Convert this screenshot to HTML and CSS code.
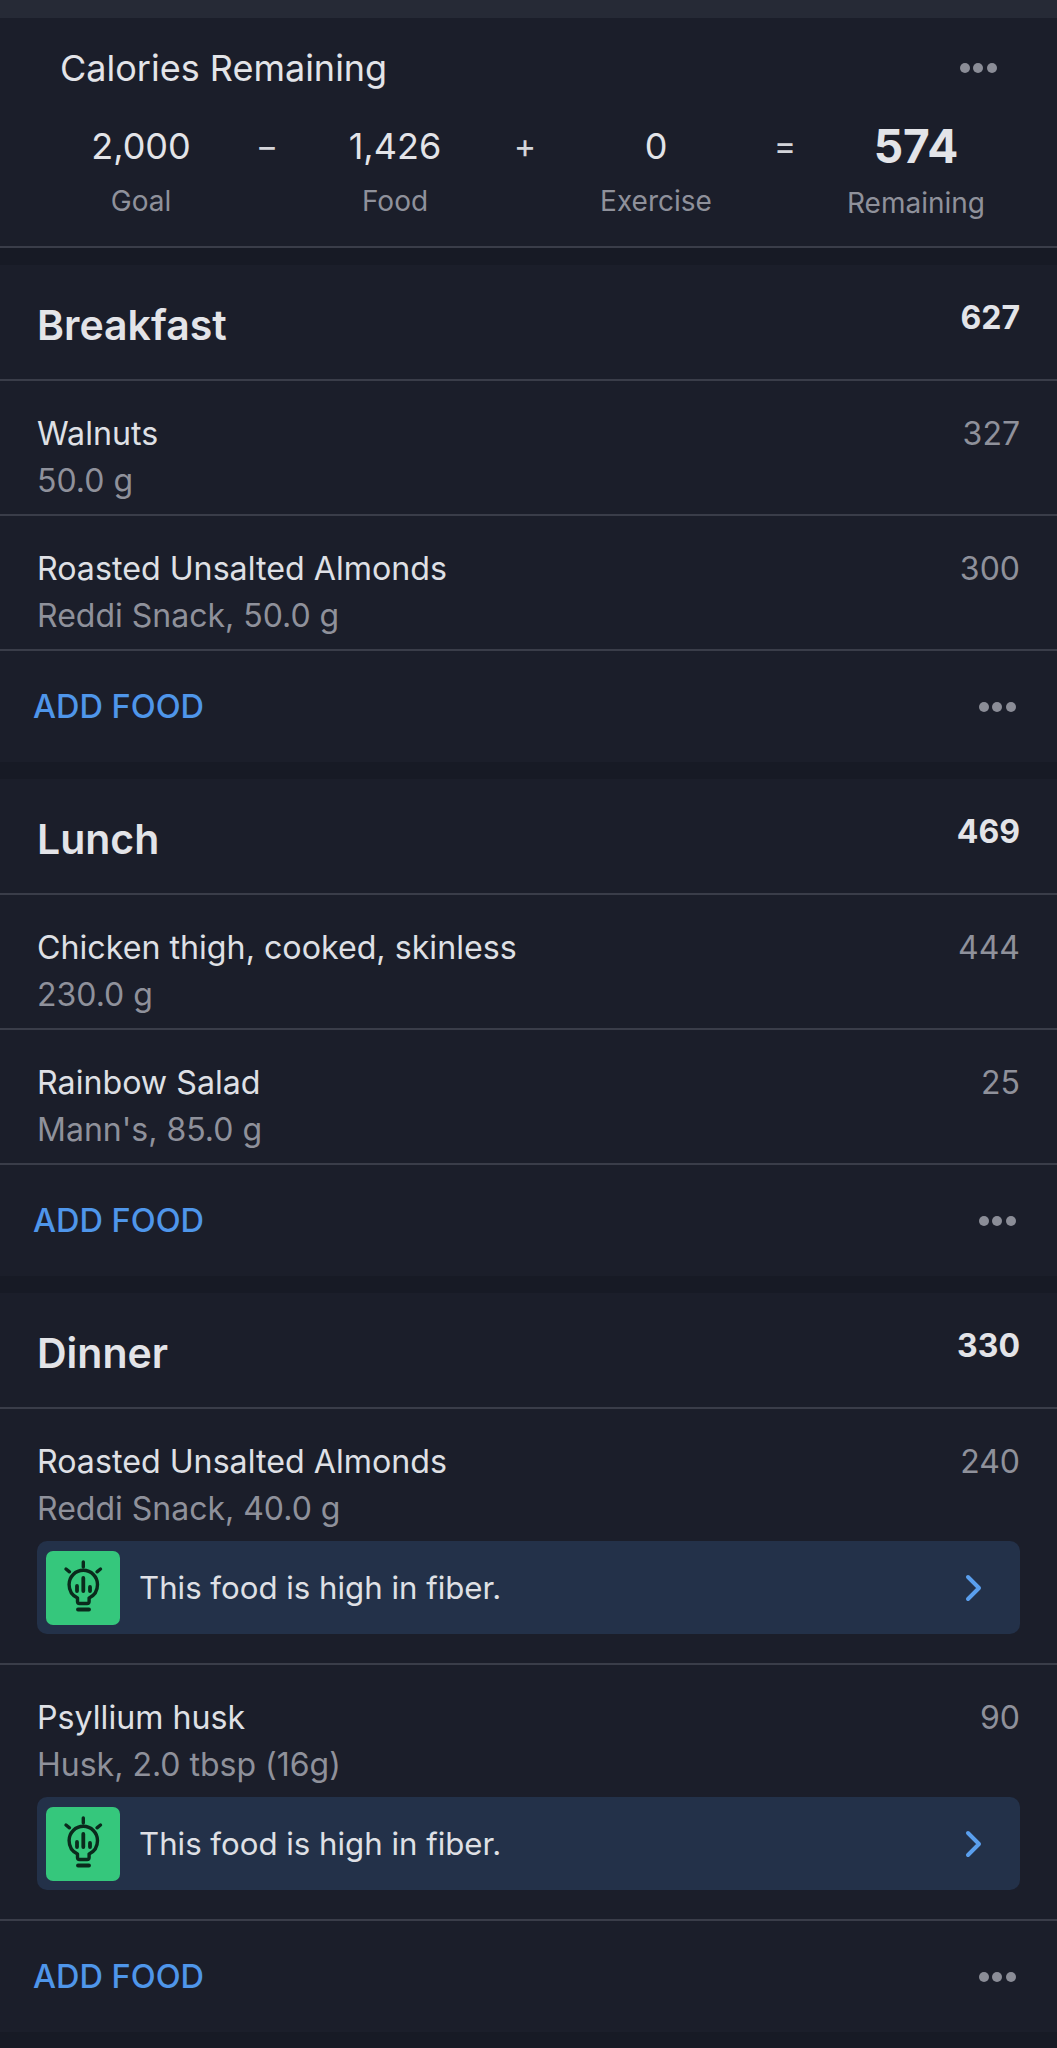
FILE: index.html
```html
<!DOCTYPE html>
<html>
<head>
	<meta charset="UTF-8">
	<title>Diary</title>
	<link rel="stylesheet" href="styles.css">
</head>
<body>
	<svg class="defs" width="0" height="0">
		<symbol id="bulb" viewBox="0 0 74 74">
			<g fill="none" stroke="#0a2a1c" stroke-width="3.400" stroke-linecap="round" stroke-linejoin="round">
				<path d="M37.300 11v5M20 18l3.500 2.800M54.500 18l-3.500 2.800"/>
				<path d="M31.500 47c-4.800-2.300-8.400-7.300-8.400-13.500a14.200 14.200 0 0 1 28.400 0c0 6.200-3.600 11.200-8.400 13.500v3.500a2 2 0 0 1-2 2h-7.600a2 2 0 0 1-2-2z"/>
				<path d="M31 35v5M37.300 27v13M44 36v4" stroke-width="3.800"/>
				<path d="M32 58.500h11" stroke-width="3.800"/>
			</g>
		</symbol>
		<symbol id="chev" viewBox="0 0 20 30">
			<path d="M3 4l11 11L3 26" fill="none" stroke="#5a9fee" stroke-width="4" stroke-linecap="round" stroke-linejoin="round"/>
		</symbol>
	</svg>

	<div class="topbar"></div>

	<section class="summary">
		<div class="summary-head">
			<span class="summary-title">Calories Remaining</span>
			<span class="dots"><i></i><i></i><i></i></span>
		</div>
		<div class="calc">
			<div class="calc-col"><b>2,000</b><span>Goal</span></div>
			<div class="calc-op">−</div>
			<div class="calc-col"><b>1,426</b><span>Food</span></div>
			<div class="calc-op">+</div>
			<div class="calc-col"><b>0</b><span>Exercise</span></div>
			<div class="calc-op">=</div>
			<div class="calc-col calc-total"><b>574</b><span>Remaining</span></div>
		</div>
	</section>

	<section class="meal">
		<div class="meal-head"><h2>Breakfast</h2><b>627</b></div>
		<div class="food">
			<div class="food-line"><span class="food-name">Walnuts</span><span class="food-cal">327</span></div>
			<div class="food-sub">50.0 g</div>
		</div>
		<div class="food">
			<div class="food-line"><span class="food-name">Roasted Unsalted Almonds</span><span class="food-cal">300</span></div>
			<div class="food-sub">Reddi Snack, 50.0 g</div>
		</div>
		<div class="meal-foot"><a>ADD FOOD</a><span class="dots"><i></i><i></i><i></i></span></div>
	</section>

	<section class="meal">
		<div class="meal-head"><h2>Lunch</h2><b>469</b></div>
		<div class="food">
			<div class="food-line"><span class="food-name">Chicken thigh, cooked, skinless</span><span class="food-cal">444</span></div>
			<div class="food-sub">230.0 g</div>
		</div>
		<div class="food">
			<div class="food-line"><span class="food-name">Rainbow Salad</span><span class="food-cal">25</span></div>
			<div class="food-sub">Mann's, 85.0 g</div>
		</div>
		<div class="meal-foot"><a>ADD FOOD</a><span class="dots"><i></i><i></i><i></i></span></div>
	</section>

	<section class="meal">
		<div class="meal-head"><h2>Dinner</h2><b>330</b></div>
		<div class="food has-tip">
			<div class="food-line"><span class="food-name">Roasted Unsalted Almonds</span><span class="food-cal">240</span></div>
			<div class="food-sub">Reddi Snack, 40.0 g</div>
			<div class="tip">
				<span class="tip-icon"><svg width="74" height="74"><use href="#bulb"/></svg></span>
				<span class="tip-text">This food is high in fiber.</span>
				<svg class="tip-arrow" width="20" height="30"><use href="#chev"/></svg>
			</div>
		</div>
		<div class="food has-tip">
			<div class="food-line"><span class="food-name">Psyllium husk</span><span class="food-cal">90</span></div>
			<div class="food-sub">Husk, 2.0 tbsp (16g)</div>
			<div class="tip">
				<span class="tip-icon"><svg width="74" height="74"><use href="#bulb"/></svg></span>
				<span class="tip-text">This food is high in fiber.</span>
				<svg class="tip-arrow" width="20" height="30"><use href="#chev"/></svg>
			</div>
		</div>
		<div class="meal-foot"><a>ADD FOOD</a><span class="dots"><i></i><i></i><i></i></span></div>
	</section>
</body>
</html>
```

FILE: styles.css
```css
html, body {margin:0; padding:0;}
body {width:1057px; height:2048px; overflow:hidden; background:#171a25; font-family:Inter, "Liberation Sans", sans-serif; color:#e3e4e8;}
.defs {position:absolute;}
.topbar {height:18px; background:#262a36;}

.summary {height:228px; background:#1b1e2a; border-bottom:2px solid #3a3d49;}
.summary-head {display:flex; justify-content:space-between; align-items:center; height:62px; padding:19px 60px 0 60px;}
.summary-title {font-size:36px; color:#e3e4e8;}
.dots {display:flex; gap:3.700px;}
.dots i {display:block; width:10px; height:10px; border-radius:50%; background:#8b8d97;}
.calc {display:grid; grid-template-columns:130px 122px 134px 126px 136px 122px 140px; justify-items:center; padding-left:76px; margin-top:16px;}
.calc-col {display:flex; flex-direction:column; align-items:center; white-space:nowrap;}
.calc-col b {font-size:36px; font-weight:400; line-height:62px; color:#e3e4e8;}
.calc-col span {margin-top:6px; font-size:28px; line-height:36px; color:#8f919b;}
.calc-op {font-size:34px; line-height:62px; color:#d4d5da;}
.calc-total b {font-size:46px; font-weight:700;}
.calc-total span {margin-top:8px;}

.meal {margin-top:17px; background:#1b1e2a;}
.meal-head {display:flex; justify-content:space-between; height:114px; padding:0 37px; border-bottom:2px solid #3a3d49;}
.meal-head h2 {margin:0; font-size:41px; font-weight:600; line-height:120px; color:#e3e4e8;}
.meal-head b {font-size:32px; font-weight:700; line-height:105px;}

.food {height:133px; padding:0 37px; border-bottom:2px solid #3a3d49;}
.food.has-tip {height:254px;}
.food-line {display:flex; justify-content:space-between; padding-top:33px; line-height:40px;}
.food-name {font-size:32.200px; color:#dfe0e5;}
.food-cal {font-size:32px; color:#8f919b;}
.food-sub {margin-top:7px; font-size:32px; line-height:40px; color:#8f919b;}

.tip {display:flex; align-items:center; height:93px; margin-top:12px; padding:0 35px 0 9px; border-radius:10px; background:#233149;}
.tip-icon {display:block; width:74px; height:74px; border-radius:7px; background:#35c77c;}
.tip-text {flex:1; margin-left:19px; font-size:31.200px; color:#dfe0e5;}

.meal-foot {display:flex; justify-content:space-between; align-items:center; height:111px; padding:0 41px 0 33px;}
.meal-foot a {font-size:32.500px; font-weight:500; color:#4f96ea;}
```
